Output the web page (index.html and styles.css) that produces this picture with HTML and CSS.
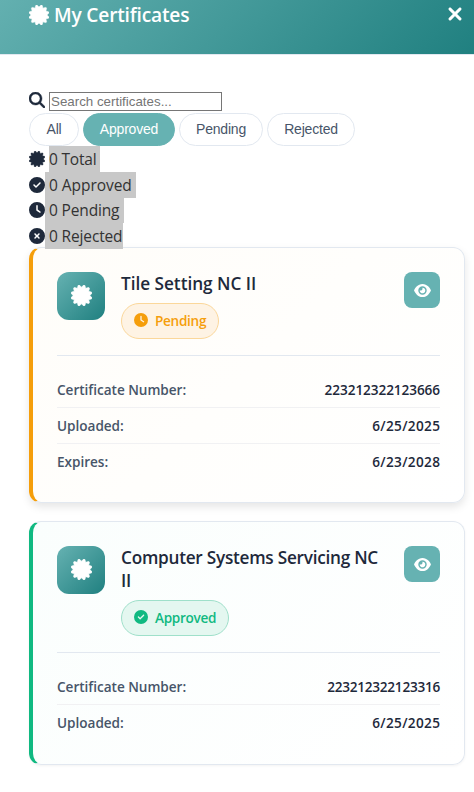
FILE: index.html
```html
<!DOCTYPE html>
<html lang="en">
<head>
<meta charset="utf-8">
<title>My Certificates</title>
<link rel="stylesheet" href="styles.css">
</head>
<body>
<svg class="sprite" aria-hidden="true">
  <symbol id="certificate" viewBox="0 0 512 512"><path d="M211 7.3C205 1 196-1.4 187.6 .8s-14.9 8.9-17.1 17.3L154.7 80.6l-62-17.5c-8.4-2.4-17.4 0-23.5 6.1s-8.500 15.100-6.100 23.500l17.500 62L18.100 170.600c-8.400 2.100-15 8.700-17.300 17.100S1 205 7.300 211l46.200 45L7.300 301C1 307-1.400 316 .8 324.400s8.900 14.900 17.300 17.100l62.500 15.800-17.500 62c-2.400 8.400 0 17.400 6.100 23.500s15.100 8.500 23.500 6.100l62-17.500 15.800 62.500c2.100 8.400 8.700 15 17.100 17.300s17.300-.2 23.400-6.400l45-46.200 45 46.200c6.100 6.200 15 8.700 23.400 6.400s14.900-8.900 17.100-17.300l15.800-62.500 62 17.500c8.400 2.400 17.400 0 23.500-6.100s8.500-15.100 6.100-23.500l-17.500-62 62.500-15.800c8.400-2.100 15-8.700 17.300-17.100s-.2-17.400-6.400-23.400l-46.200-45 46.200-45c6.200-6.100 8.700-15 6.400-23.400s-8.900-14.900-17.300-17.100l-62.500-15.800 17.500-62c2.400-8.400 0-17.400-6.100-23.500s-15.100-8.500-23.500-6.100l-62 17.500L341.400 18.100c-2.100-8.400-8.700-15-17.100-17.300S307 1 301 7.300L256 53.500 211 7.300z"/></symbol>
  <symbol id="check" viewBox="0 0 512 512"><path d="M256 512A256 256 0 1 0 256 0a256 256 0 1 0 0 512zM369 209L241 337c-9.400 9.400-24.600 9.400-33.900 0l-64-64c-9.400-9.400-9.400-24.600 0-33.900s24.600-9.400 33.900 0l47 47L335 175c9.400-9.400 24.600-9.400 33.900 0s9.400 24.600 0 33.900z"/></symbol>
  <symbol id="clock" viewBox="0 0 512 512"><path d="M256 0a256 256 0 1 1 0 512A256 256 0 1 1 256 0zM232 120V256c0 8 4 15.500 10.700 20l96 64c11 7.400 25.900 4.400 33.300-6.700s4.400-25.900-6.700-33.300L280 243.200V120c0-13.300-10.700-24-24-24s-24 10.700-24 24z"/></symbol>
  <symbol id="times-circle" viewBox="0 0 512 512"><path d="M256 512A256 256 0 1 0 256 0a256 256 0 1 0 0 512zM175 175c9.400-9.400 24.600-9.400 33.900 0l47 47 47-47c9.400-9.400 24.600-9.400 33.900 0s9.400 24.600 0 33.900l-47 47 47 47c9.400 9.400 9.400 24.600 0 33.900s-24.600 9.400-33.900 0l-47-47-47 47c-9.400 9.400-24.600 9.400-33.900 0s-9.400-24.600 0-33.900l47-47-47-47c-9.400-9.400-9.400-24.600 0-33.900z"/></symbol>
  <symbol id="search" viewBox="0 0 512 512"><path d="M416 208c0 45.900-14.900 88.300-40 122.700L502.600 457.400c12.500 12.500 12.500 32.800 0 45.300s-32.800 12.500-45.300 0L330.700 376c-34.400 25.200-76.800 40-122.700 40C93.100 416 0 322.900 0 208S93.100 0 208 0S416 93.100 416 208zM208 352a144 144 0 1 0 0-288 144 144 0 1 0 0 288z"/></symbol>
  <symbol id="xmark" viewBox="0 0 384 512"><path d="M342.600 150.600c12.500-12.500 12.500-32.800 0-45.300s-32.800-12.500-45.300 0L192 210.700 86.600 105.400c-12.500-12.500-32.800-12.500-45.300 0s-12.500 32.800 0 45.300L146.700 256 41.400 361.400c-12.500 12.500-12.500 32.800 0 45.300s32.800 12.500 45.300 0L192 301.300 297.400 406.600c12.500 12.500 32.800 12.500 45.300 0s12.500-32.800 0-45.300L237.300 256 342.600 150.600z"/></symbol>
  <symbol id="eye" viewBox="0 0 576 512"><path d="M288 32c-80.800 0-145.500 36.800-192.600 80.600C48.600 156 17.300 208 2.500 243.700c-3.300 7.900-3.300 16.700 0 24.600C17.300 304 48.600 356 95.400 399.400C142.500 443.200 207.200 480 288 480s145.500-36.800 192.600-80.600c46.800-43.500 78.100-95.400 93-131.100c3.300-7.900 3.300-16.700 0-24.600c-14.900-35.700-46.200-87.700-93-131.100C433.500 68.800 368.800 32 288 32zM144 256a144 144 0 1 1 288 0 144 144 0 1 1 -288 0zm144-64c0 35.300-28.700 64-64 64c-7.100 0-13.900-1.200-20.300-3.300c-5.500-1.800-11.900 1.600-11.700 7.400c.3 6.900 1.300 13.800 3.200 20.700c13.700 51.200 66.400 81.600 117.600 67.900s81.600-66.400 67.900-117.600c-11.100-41.500-47.800-69.400-88.600-71.100c-5.800-.2-9.200 6.100-7.400 11.700c2.100 6.400 3.300 13.200 3.300 20.300z"/></symbol>
</svg>

<header class="modal-header">
  <svg class="header-icon heavy"><use href="#certificate"/></svg>
  <h1 class="header-title">My Certificates</h1>
  <svg class="close-icon heavy"><use href="#xmark"/></svg>
</header>

<main class="modal-body">
  <div class="search">
    <svg class="icon heavy"><use href="#search"/></svg>
    <input class="search-input" type="text" placeholder="Search certificates...">
  </div>
  <div class="filters">
    <button class="filter filter-all">All</button>
    <button class="filter filter-approved active">Approved</button>
    <button class="filter filter-pending">Pending</button>
    <button class="filter filter-rejected">Rejected</button>
  </div>
  <div class="stats">
    <div class="stat"><svg class="icon heavy"><use href="#certificate"/></svg><span class="mark mark-total">0 Total</span></div>
    <div class="stat"><svg class="icon"><use href="#check"/></svg><span class="mark mark-approved">0 Approved</span></div>
    <div class="stat"><svg class="icon"><use href="#clock"/></svg><span class="mark mark-pending">0 Pending</span></div>
    <div class="stat"><svg class="icon"><use href="#times-circle"/></svg><span class="mark mark-rejected">0 Rejected</span></div>
  </div>

  <section class="cards">
    <article class="card pending">
      <div class="card-head">
        <div class="card-icon"><svg class="heavy"><use href="#certificate"/></svg></div>
        <div class="card-info">
          <h2 class="card-title title-short">Tile Setting NC II</h2>
          <span class="badge"><svg><use href="#clock"/></svg><span>Pending</span></span>
        </div>
        <button class="view"><svg><use href="#eye"/></svg></button>
      </div>
      <div class="row"><span class="label">Certificate Number:</span><span class="value">223212322123666</span></div>
      <div class="row"><span class="label">Uploaded:</span><span class="value date">6/25/2025</span></div>
      <div class="row"><span class="label">Expires:</span><span class="value date">6/23/2028</span></div>
    </article>
    <article class="card approved">
      <div class="card-head">
        <div class="card-icon"><svg class="heavy"><use href="#certificate"/></svg></div>
        <div class="card-info">
          <h2 class="card-title">Computer Systems Servicing NC<br>II</h2>
          <span class="badge"><svg><use href="#check"/></svg><span>Approved</span></span>
        </div>
        <button class="view"><svg><use href="#eye"/></svg></button>
      </div>
      <div class="row"><span class="label">Certificate Number:</span><span class="value">223212322123316</span></div>
      <div class="row"><span class="label">Uploaded:</span><span class="value date">6/25/2025</span></div>
    </article>
  </section>
</main>
</body>
</html>
```
FILE: styles.css
```css
* { box-sizing: border-box; }
body {
  margin: 0;
  height: 792px;
  overflow: hidden;
  background: #fff;
  color: #1e293b;
  font-family: "Segoe UI", "Open Sans", "Noto Sans", sans-serif;
}
.sprite { display: none; }
svg { display: block; fill: currentColor; flex: none; }
.heavy { stroke: currentColor; stroke-width: 14px; overflow: visible; }

.modal-header {
  display: flex;
  align-items: center;
  height: 79px;
  margin-top: -24px;
  padding: 0 11px 1px 29px;
  border-bottom: 1px solid #e2e8f0;
  background: linear-gradient(135deg, #66b2b2, #208080) border-box;
  background-clip: padding-box;
  color: #fff;
}
.header-icon { width: 20px; height: 20px; margin-right: 5px; }
.header-title {
  flex: 1;
  margin: 0;
  font-size: 19.2px;
  font-weight: 600;
  line-height: 30px;
  letter-spacing: -0.2px;
}
.close-icon { width: 16px; height: 20px; margin-bottom: 1px; }

.modal-body { padding: 37px 9px 0 29px; }
.search { display: flex; align-items: center; height: 19px; gap: 4px; }
.icon { width: 16px; height: 16px; }
.search .icon { margin-bottom: 3px; }
.search-input {
  width: 173px;
  height: 19px;
  padding: 0 1px;
  border: 1px solid #767676;
  background: #fff;
  font: 13.33px "Liberation Sans", sans-serif;
}
.search-input::placeholder { color: #757575; }

.filters { display: flex; gap: 4px; margin-top: 2px; height: 33px; }
.filter {
  padding: 0 0 1px;
  border: 1px solid #e2e8f0;
  border-radius: 20px;
  background: #fff;
  color: #475569;
  font: 500 14px "Liberation Sans", sans-serif;
  letter-spacing: -0.2px;
}
.filter-all { width: 50px; }
.filter-approved { width: 92px; }
.filter-pending { width: 84px; }
.filter-rejected { width: 88px; }
.filter.active { background: #66b2b2; border-color: #66b2b2; color: #fff; }

.stat { display: flex; height: 25.5px; align-items: flex-start; }
.stat .icon { margin-top: 5px; }
.mark {
  position: relative;
  z-index: 1;
  height: 26px;
  padding-left: 4px;
  background: #c8c8c8;
  color: #333;
  font-size: 15.5px;
  line-height: 27px;
  letter-spacing: -0.05px;
  white-space: nowrap;
}
.mark-total { width: 51px; margin-left: 4px; padding-left: 0; letter-spacing: -0.2px; }
.mark-approved { width: 91px; }
.mark-pending { width: 79px; letter-spacing: -0.15px; }
.mark-rejected { width: 78px; letter-spacing: -0.15px; }

.cards { display: flex; flex-direction: column; gap: 18px; margin-top: -1px; }
.card {
  height: 256px;
  padding: 24px;
  border: 1px solid #e2e8f0;
  border-left-width: 4px;
  border-radius: 12px;
}
.card.pending {
  border-left-color: #f59e0b;
  background: linear-gradient(135deg, #fffdf9, #fff);
  box-shadow: 0 4px 8px rgba(0, 0, 0, 0.1);
}
.card.approved {
  height: 244px;
  border-left-color: #10b981;
  background: linear-gradient(135deg, #fafefd, #fff);
  box-shadow: 0 1px 3px rgba(0, 0, 0, 0.05);
}
.card-head {
  display: flex;
  align-items: flex-start;
  gap: 16px;
  padding-bottom: 16px;
  margin-bottom: 16px;
  border-bottom: 1px solid #e2e8f0;
}
.card-icon {
  display: flex;
  align-items: center;
  justify-content: center;
  flex: none;
  width: 48px;
  height: 48px;
  padding-bottom: 1px;
  border-radius: 12px;
  background: linear-gradient(135deg, #66b2b2, #208080);
  color: #fff;
}
.card-icon svg { width: 21px; height: 21px; }
.card-info { flex: 1; min-width: 0; }
.card-title {
  margin: 0 0 8px;
  font-size: 17.2px;
  font-weight: 600;
  line-height: 23px;
  letter-spacing: -0.25px;
  white-space: nowrap;
}
.title-short { letter-spacing: -0.02px; }
.badge {
  display: flex;
  align-items: center;
  gap: 7px;
  width: 98px;
  height: 36px;
  padding: 0 0 1px 12px;
  border: 1px solid #fbd79a;
  border-radius: 20px;
  background: #fef3e4;
  color: #f59e0b;
  font-size: 13.6px;
  font-weight: 600;
  letter-spacing: -0.3px;
}
.badge svg { width: 14px; height: 14px; margin-bottom: 1px; }
.approved .badge { width: 108px; background: #e4f7f0; border-color: #9fe0ca; color: #10b981; }
.view {
  display: flex;
  align-items: center;
  justify-content: center;
  flex: none;
  width: 36px;
  height: 36px;
  padding: 0;
  border: 0;
  border-radius: 8px;
  background: #66b2b2;
  color: #fff;
}
.view svg { width: 17px; height: 15px; }
.row {
  display: flex;
  align-items: center;
  justify-content: space-between;
  height: 36px;
  padding-bottom: 1px;
  border-bottom: 1px solid #f1f1f3;
  font-size: 13.6px;
  font-weight: 600;
}
.row:last-child { border-bottom-color: transparent; }
.label { color: #475569; letter-spacing: -0.03px; }
.value { color: #1e293b; letter-spacing: -0.08px; }
.date { letter-spacing: 0.35px; margin-right: -0.35px; }
.approved .value:not(.date) { letter-spacing: -0.25px; }
```
